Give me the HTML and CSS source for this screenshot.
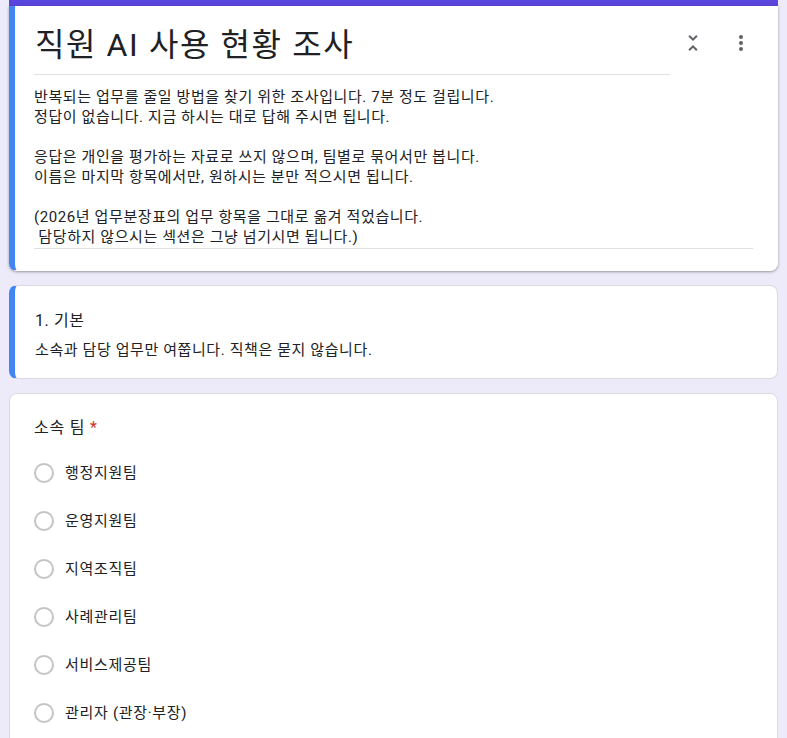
FILE: index.html
```html
<!DOCTYPE html>
<html lang="ko">
<head>
<meta charset="utf-8">
<title>직원 AI 사용 현황 조사</title>
<link rel="stylesheet" href="styles.css">
</head>
<body>
<main class="form">
  <section class="header">
    <div class="topbar"></div>
    <div class="card card-accent header-card">
      <div class="title-row">
        <h1 class="title">직원 AI 사용 현황 조사</h1>
        <div class="tools">
          <svg class="icon" viewBox="0 0 24 24" width="24" height="24"><path d="M7.41 18.59L8.83 20 12 16.83 15.17 20l1.41-1.41L12 14l-4.59 4.59zm9.18-13.18L15.17 4 12 7.17 8.83 4 7.41 5.41 12 10l4.59-4.59z"/></svg>
          <svg class="icon" viewBox="0 0 24 24" width="24" height="24"><circle cx="12" cy="6" r="2"/><circle cx="12" cy="12" r="2"/><circle cx="12" cy="18" r="2"/></svg>
        </div>
      </div>
      <div class="desc">반복되는 업무를 줄일 방법을 찾기 위한 조사입니다. 7분 정도 걸립니다.
정답이 없습니다. 지금 하시는 대로 답해 주시면 됩니다.

응답은 개인을 평가하는 자료로 쓰지 않으며, 팀별로 묶어서만 봅니다.
이름은 마지막 항목에서만, 원하시는 분만 적으시면 됩니다.

(2026년 업무분장표의 업무 항목을 그대로 옮겨 적었습니다.
 담당하지 않으시는 섹션은 그냥 넘기시면 됩니다.)</div>
    </div>
  </section>

  <section class="card card-accent section-card">
    <h2 class="section-title">1. 기본</h2>
    <p class="section-desc">소속과 담당 업무만 여쭙니다. 직책은 묻지 않습니다.</p>
  </section>

  <section class="card question-card">
    <h3 class="question">소속 팀 <span class="req">*</span></h3>
    <ul class="options">
      <li class="option"><span class="radio"></span><span class="label">행정지원팀</span></li>
      <li class="option"><span class="radio"></span><span class="label">운영지원팀</span></li>
      <li class="option"><span class="radio"></span><span class="label">지역조직팀</span></li>
      <li class="option"><span class="radio"></span><span class="label">사례관리팀</span></li>
      <li class="option"><span class="radio"></span><span class="label">서비스제공팀</span></li>
      <li class="option"><span class="radio"></span><span class="label">관리자 (관장·부장)</span></li>
    </ul>
  </section>
</main>
</body>
</html>
```

FILE: styles.css
```css
html, body {
  margin: 0;
  padding: 0;
  height: 738px;
  overflow: hidden;
}
body {
  background: #edebfa;
  font-family: "Roboto", "Noto Sans CJK KR", "Noto Sans", sans-serif;
  color: #202124;
}
.form {
  padding: 0 9px;
  display: flex;
  flex-direction: column;
  gap: 14px;
}
.topbar {
  height: 6px;
  background: #5a46dd;
}
.card {
  background: #fff;
  border: 1px solid #dadce0;
  border-radius: 8px;
}
.card-accent {
  border-left: 6px solid #4285f4;
}
.header-card {
  border-top: none;
  border-radius: 0 0 8px 8px;
  border-color: #fff;
  border-left-color: #4285f4;
  box-shadow: 0 1px 2px rgba(60,64,67,.35), 0 1px 3px 1px rgba(60,64,67,.12);
  padding: 19px 24px 21px 19px;
}
.title-row {
  display: flex;
  align-items: flex-start;
}
.title {
  flex: 1;
  margin: 0;
  font-size: 32px;
  letter-spacing: 1.6px;
  font-weight: 400;
  line-height: 40px;
  padding: 0 0 9px 1px;
  border-bottom: 1px solid #e0e0e0;
}
.tools {
  display: flex;
  gap: 24px;
  margin: 6px 0 0 11px;
}
.icon {
  fill: #5f6368;
  display: block;
}
.desc {
  margin-top: 12px;
  font-size: 15px;
  letter-spacing: 0.6px;
  line-height: 20px;
  white-space: pre-wrap;
  padding-bottom: 1px;
  border-bottom: 1px solid #e0e0e0;
}
.section-card {
  padding: 23px 24px 18px 20px;
}
.section-title {
  margin: 0;
  font-size: 16px;
  letter-spacing: 0.6px;
  font-weight: 400;
  line-height: 24px;
}
.section-desc {
  margin: 7px 0 0;
  font-size: 15px;
  letter-spacing: 0.6px;
  line-height: 20px;
}
.question-card {
  padding: 22px 24px 24px 24px;
}
.question {
  margin: 0;
  font-size: 16px;
  letter-spacing: 0.8px;
  font-weight: 400;
  line-height: 24px;
}
.req {
  color: #d93025;
}
.options {
  list-style: none;
  margin: 9px 0 0;
  padding: 0;
}
.option {
  height: 48px;
  display: flex;
  align-items: center;
  gap: 11px;
}
.radio {
  width: 16px;
  height: 16px;
  border: 2px solid #c4c4c4;
  border-radius: 50%;
  flex: none;
}
.label {
  font-size: 15px;
  letter-spacing: 0.7px;
  line-height: 20px;
}
```
